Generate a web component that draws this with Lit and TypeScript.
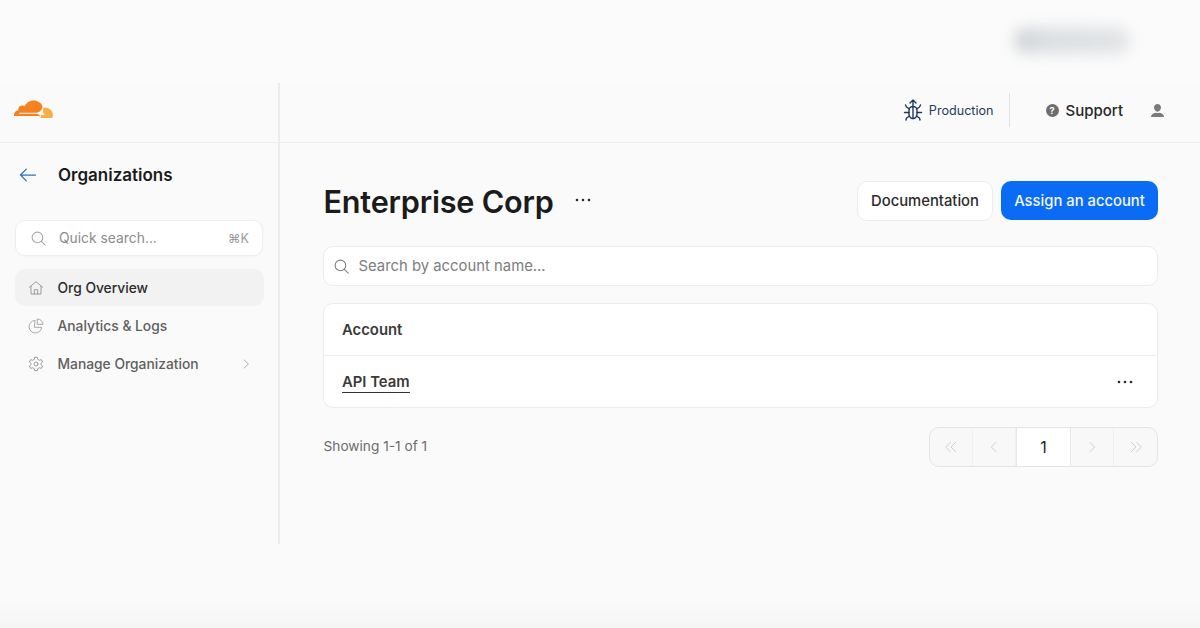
import { LitElement, html, css, svg } from "lit";
import { customElement } from "lit/decorators.js";

const stroke = (size: number, body: unknown, cls = "") => html`<svg class=${cls} width=${size} height=${size} viewBox="0 0 24 24" fill="none" stroke="currentColor" stroke-width="1.5" stroke-linecap="round" stroke-linejoin="round">${body}</svg>`;

const searchIcon = (s: number) => stroke(s, svg`<circle cx="10.5" cy="10.5" r="7.5"/><path d="M16 16l5.5 5.5"/>`);
const dots = html`<svg class="dots" width="16" height="4" viewBox="0 0 16 4" fill="currentColor"><circle cx="2" cy="2" r="1.3"/><circle cx="8" cy="2" r="1.3"/><circle cx="14" cy="2" r="1.3"/></svg>`;

@customElement("app-root")
export class AppRoot extends LitElement {
  static styles = css`
    :host { display: block; width: 1200px; height: 628px; overflow: hidden; position: relative; background: linear-gradient(#fafafa 0, #fafafa 96%, #f5f5f5 100%); font-family: Inter, "Liberation Sans", sans-serif; color: #1d1d1d; }
    * { box-sizing: border-box; }
    .top { height: 83px; position: relative; background: #fbfbfb; }
    .blur { position: absolute; left: 1014px; top: 27px; width: 116px; height: 27px; border-radius: 14px; background: linear-gradient(90deg, #ced2d6 0, #dcdfe2 25%, #e2e4e6 100%); filter: blur(7px); }
    .header { height: 60px; display: flex; align-items: center; border-bottom: 1.5px solid #eeeeee; }
    .logo-cell { width: 280px; height: 100%; padding: 16px 0 0 14px; border-right: 2px solid #ececec; }
    .logo-cell svg { display: block; }
    .hright { flex: 1; display: flex; align-items: center; justify-content: flex-end; padding: 0 35px 5px 0; height: 100%; }
    .env { display: flex; align-items: center; gap: 6px; color: #1f3a5f; font-size: 12.6px; padding-right: 15px; height: 34px; border-right: 1px solid #e3e3e3; }
    .support { display: flex; align-items: center; gap: 7px; font-size: 15px; font-weight: 500; margin-left: 36px; color: #262626; }
    .user { margin-left: 27px; color: #7a7a7a; display: block; }
    .qmark { width: 13px; height: 13px; border-radius: 50%; background: #6e6e6e; color: #fff; font-size: 9px; font-weight: 700; display: flex; align-items: center; justify-content: center; }
    .body { display: flex; height: 401px; }
    .side { width: 280px; border-right: 2px solid #ececec; padding: 0 15px; }
    .back { display: flex; align-items: center; height: 32px; margin-top: 16px; padding-left: 3px; gap: 20px; font-size: 17px; font-weight: 600; color: #1a1a1a; }
    .back svg { color: #2f6fc4; }
    .quick { margin-top: 29px; width: 248px; height: 36px; border: 1px solid #eeeeee; border-radius: 10px; background: #fff; display: flex; align-items: center; padding: 0 13px 0 14px; color: #9a9a9a; font-size: 13.85px; box-shadow: 0 1px 2px rgba(0,0,0,.03); }
    .quick svg { margin-right: 12px; color: #a8a8a8; }
    .quick .ph { flex: 1; color: #8c8c8c; }
    .quick .kbd { font-size: 12.5px; color: #9a9a9a; }
    .nav { margin-top: 13px; display: flex; flex-direction: column; gap: 1px; }
    .item { height: 37px; width: 249px; border-radius: 10px; display: flex; align-items: center; padding-left: 13px; gap: 13.5px; font-size: 13.8px; font-weight: 500; color: #5f5f5f; }
    .item svg { color: #9c9c9c; flex: none; }
    .item.active { background: #f2f2f2; color: #2b2b2b; }
    .item .label { flex: 1; }
    .item .chev { margin-right: 11px; color: #a0a0a0; }
    .main { flex: 1; padding: 38px 42px 0 43px; }
    .titlerow { display: flex; align-items: center; height: 40px; padding-left: 0.5px; }
    h1 { margin: 0; font-size: 30.6px; font-weight: 600; letter-spacing: -0.2px; color: #1b1b1b; }
    .titlerow .dots { margin-left: 21px; margin-bottom: 2px; color: #2a2a2a; }
    .btns { margin-left: auto; display: flex; gap: 8px; }
    .btn { height: 40px; border-radius: 10px; display: flex; align-items: center; justify-content: center; font-size: 14.8px; font-weight: 500; }
    .btn.sec { width: 136px; background: #fff; border: 1.5px solid #ececec; color: #2b2b2b; }
    .btn.pri { width: 157px; height: 39px; background: #0a6cf5; color: #f4f8ff; }
    .search { margin-top: 25px; height: 40px; border: 1.5px solid #ececec; border-radius: 10px; background: #fff; display: flex; align-items: center; padding-left: 8.5px; gap: 9px; font-size: 14.85px; color: #7d7d7d; }
    .search svg { color: #7f7f7f; }
    .table { margin-top: 17px; height: 105px; border: 1.5px solid #ececec; border-radius: 10px; background: #fff; }
    .row { display: flex; align-items: center; padding: 0 24px 0 18px; font-size: 14.85px; font-weight: 600; color: #3a3a3a; }
    .row.head { height: 52px; border-bottom: 1.5px solid #efefef; }
    .row.body-row { height: 50px; justify-content: space-between; }
    .link { border-bottom: 1.5px solid #333; line-height: 19px; margin-top: 3px; }
    .row .dots { color: #2a2a2a; margin-top: 1px; }
    .foot { margin-top: 19px; display: flex; align-items: center; justify-content: space-between; padding-left: 0.5px; }
    .count { font-size: 13.7px; color: #6c6c6c; padding-bottom: 2px; }
    .pager { display: flex; height: 40px; border: 1.5px solid #e4e4e4; border-radius: 10px; background: #f8f8f8; overflow: hidden; }
    .pg { display: flex; align-items: center; justify-content: center; color: #d0d0d0; border-right: 1px solid #f0f0f0; width: 43px; }
    .pg:last-child { border-right: 0; }
    .pg.cur { background: #fff; color: #262626; font-size: 16px; border-left: 1.5px solid #e8e8e8; border-right: 1.5px solid #e8e8e8; width: 55px; }
  `;

  render() {
    return html`
      <div class="top"><div class="blur"></div></div>
      <div class="header">
        <div class="logo-cell">
          <svg width="39" height="20" viewBox="0 0 40 20" preserveAspectRatio="none">
            <path fill="#f6821f" d="M26.5 19.6c.4-1.4.3-2.6-.4-3.5-.6-.8-1.6-1.3-2.9-1.4L5.6 14.5c-.2 0-.3-.1-.4-.2-.1-.1-.1-.2 0-.4.1-.2.2-.3.4-.3l17.8-.2c2-.1 4.3-1.8 5-3.8l.9-2.6c0-.1.1-.2 0-.3C28.2 2.7 24.5 0 20 0c-4.1 0-7.6 2.6-8.9 6.3-.8-.6-1.9-.9-3-.8-2 .2-3.6 1.8-3.8 3.8-.1.5 0 1 .1 1.5C1.9 10.9 0 13.4 0 16.2c0 .3 0 .5.1.8 0 .1.1.2.3.2h.1l26-.1z" transform="translate(0 1.6) scale(1 .9)"/>
            <path fill="#fbad41" d="M31.4 8.5h-.7c-.1 0-.2.1-.2.2l-.6 2c-.4 1.4-.3 2.6.4 3.5.6.8 1.6 1.3 2.9 1.4l-5 .3c-.4 0-.5.6-.7 1.4l-.3 1.3c0 .2.1.3.2.3H39c.1 0 .3-.1.3-.2.4-.8.6-1.8.6-2.8 0-4.1-3.8-7.4-8.5-7.4z"/>
          </svg>
        </div>
        <div class="hright">
          <div class="env">
            <svg width="20" height="22" viewBox="0 0 20 22" fill="none" stroke="#1f3a5f" stroke-width="1.4" stroke-linecap="round" stroke-linejoin="round">
              <path d="M10 1v7M7 4l3-3 3 3"/>
              <path d="M6 11c0-2 1.8-3.5 4-3.5s4 1.5 4 3.5v4c0 2.5-1.8 4.5-4 4.5s-4-2-4-4.5z"/>
              <path d="M10 8v11.5M6.5 10L3.5 8l-1-2M13.5 10l3-2 1-2M6 13.5H1.5M14 13.5h4.5M6.5 17l-3 2-.5 2M13.5 17l3 2 .5 2"/>
            </svg>
            <span>Production</span>
          </div>
          <div class="support"><span class="qmark">?</span><span>Support</span></div>
          <svg class="user" width="15" height="15" viewBox="0 0 16 16" fill="currentColor"><path d="M8 1c2.2 0 3.7 1.6 3.7 3.8S10.2 9.2 8 9.2 4.3 7 4.3 4.8 5.8 1 8 1z"/><path d="M1 15c0-2.8 2.2-4 5-4.7 1.1.5 2.900.5 4 0 2.800.7 5 1.900 5 4.700z"/></svg>
        </div>
      </div>
      <div class="body">
        <aside class="side">
          <div class="back">
            ${stroke(20, svg`<path d="M21 12H3M10 5l-7 7 7 7"/>`)}
            <span>Organizations</span>
          </div>
          <div class="quick">${searchIcon(17)}<span class="ph">Quick search...</span><span class="kbd">⌘K</span></div>
          <nav class="nav">
            <div class="item active">
              ${stroke(16, svg`<path d="M2 11l10-8.5L22 11M4.5 9.5V21h15V9.500M9.500 21v-6.500h5V21"/>`)}
              <span class="label">Org Overview</span>
            </div>
            <div class="item">
              ${stroke(16, svg`<path stroke-width="1.3" d="M10 3.5a9.5 9.5 0 1 0 10.5 10.5H10z"/><path stroke-width="1.3" d="M14.5 1.5a8 8 0 0 1 8 8h-8z"/>`)}
              <span class="label">Analytics &amp; Logs</span>
            </div>
            <div class="item">
              ${stroke(16, svg`<circle cx="12" cy="12" r="3"/><path d="M10 2h4l.6 3 2.4 1.4 2.9-1 2 3.5-2.3 2v2.2l2.3 2-2 3.5-2.9-1-2.4 1.4-.6 3h-4l-.6-3L7 17.600l-2.900 1-2-3.500 2.300-2v-2.200l-2.300-2 2-3.500 2.900 1L9.400 5z"/>`)}
              <span class="label">Manage Organization</span>
              ${stroke(14, svg`<path d="M9 5l7 7-7 7"/>`, "chev")}
            </div>
          </nav>
        </aside>
        <main class="main">
          <div class="titlerow">
            <h1>Enterprise Corp</h1>
            ${dots}
            <div class="btns">
              <div class="btn sec">Documentation</div>
              <div class="btn pri">Assign an account</div>
            </div>
          </div>
          <div class="search">${searchIcon(17)}<span>Search by account name...</span></div>
          <div class="table">
            <div class="row head">Account</div>
            <div class="row body-row"><span class="link">API Team</span>${dots}</div>
          </div>
          <div class="foot">
            <span class="count">Showing 1-1 of 1</span>
            <div class="pager">
              <div class="pg">${stroke(16, svg`<path d="M11 5l-7 7 7 7M19 5l-7 7 7 7"/>`)}</div>
              <div class="pg">${stroke(16, svg`<path d="M15 5l-7 7 7 7"/>`)}</div>
              <div class="pg cur">1</div>
              <div class="pg">${stroke(16, svg`<path d="M9 5l7 7-7 7"/>`)}</div>
              <div class="pg">${stroke(16, svg`<path d="M5 5l7 7-7 7M13 5l7 7-7 7"/>`)}</div>
            </div>
          </div>
        </main>
      </div>
    `;
  }
}
